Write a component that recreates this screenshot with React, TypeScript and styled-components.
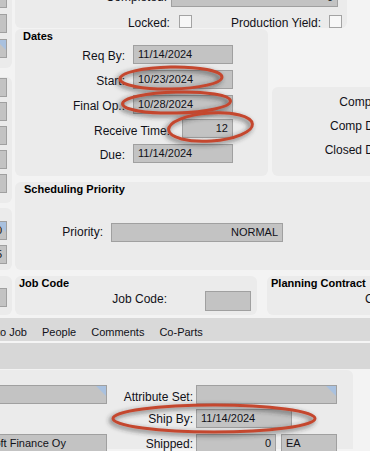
import styled, { createGlobalStyle } from 'styled-components'

const GlobalStyle = createGlobalStyle`
    html, body {
        margin: 0;
        padding: 0;
        background: #f3f3f3;
    }
    body {
        font-family: "Liberation Sans", Arial, sans-serif;
        color: #111118;
    }
`

const Screen = styled.div`
    position: relative;
    width: 370px;
    height: 451px;
    overflow: hidden;
    background: #f3f3f3;
    font-size: 12px;
`

//upper form area
const Upper = styled.div`
    display: flex;
    gap: 3px;
    margin-top: -20px;
    height: 335px;
`

const SideCol = styled.div`
    width: 12px;
    flex: none;
    display: flex;
    flex-direction: column;
`

const SidePanel = styled.div<{ $h: number, $top: number, $pad: number, $gap: number }>`
    box-sizing: border-box;
    height: ${p => p.$h}px;
    margin-top: ${p => p.$top}px;
    padding: ${p => p.$pad}px 5px 0 0;
    display: flex;
    flex-direction: column;
    align-items: flex-end;
    gap: ${p => p.$gap}px;
    background: #ebebeb;
    border-radius: 0 6px 6px 0;
`

const MainCol = styled.div`
    width: 420px;
    flex: none;
    display: flex;
    flex-direction: column;
`

const Panel = styled.div`
    box-sizing: border-box;
    background: #ebebeb;
    border-radius: 6px;
`

const TopPanel = styled(Panel)`
    width: 332px;
    height: 48px;
    padding: 7px 5px 0 0;
    display: flex;
    flex-direction: column;
    align-items: flex-end;
    gap: 8px;
    border-radius: 0 0 6px 6px;
`

const DatesRow = styled.div`
    display: flex;
    gap: 4px;
    height: 147px;
    margin-top: 1px;
`

const DatesPanel = styled(Panel)`
    width: 253px;
`

const CompPanel = styled(Panel)`
    flex: 1;
    margin-top: 58px;
    padding: 6px 41px 0 0;
    display: flex;
    flex-direction: column;
    align-items: flex-end;
    gap: 5px;
`

const SchedulePanel = styled(Panel)`
    height: 88px;
    margin-top: 6px;
`

const CodeRow = styled.div`
    display: flex;
    gap: 10px;
    height: 39px;
    margin-top: 6px;
`

const JobPanel = styled(Panel)`
    width: 242px;
`

const PlanningPanel = styled(Panel)`
    flex: 1;
`

const Title = styled.div<{ $indent: number }>`
    padding-left: ${p => p.$indent}px;
    font-size: 11px;
    font-weight: bold;
    line-height: 14px;
    color: #000;
    white-space: nowrap;
`

const FieldStack = styled.div<{ $gap: number, $top: number }>`
    display: flex;
    flex-direction: column;
    gap: ${p => p.$gap}px;
    margin-top: ${p => p.$top}px;
`

const FieldRow = styled.div<{ $gap?: number, $top?: number, $indent?: number }>`
    display: flex;
    align-items: flex-start;
    gap: ${p => p.$gap ?? 8}px;
    margin-top: ${p => p.$top ?? 0}px;
    padding-left: ${p => p.$indent ?? 0}px;
`

const CompletedRow = styled(FieldRow)`
    margin-right: 4px;
`

// $nudge moves the text down (or up) against the field it labels
const Label = styled.span<{ $w?: number, $nudge?: number, $lh?: number }>`
    flex: none;
    box-sizing: border-box;
    ${p => p.$w !== undefined && `width: ${p.$w}px;`}
    height: ${p => p.$lh ?? 19}px;
    text-align: right;
    font-size: 12px;
    line-height: ${p => p.$lh ?? 19}px;
    padding-top: ${p => Math.max(p.$nudge ?? 0, 0)}px;
    margin-top: ${p => Math.min(p.$nudge ?? 0, 0)}px;
    white-space: nowrap;
`

const Field = styled.div<{ $w: number, $h?: number, $align?: 'left' | 'right', $marked?: boolean }>`
    position: relative;
    box-sizing: border-box;
    flex: none;
    width: ${p => p.$w}px;
    height: ${p => p.$h ?? 19}px;
    padding: 0 4px;
    border: 1px solid #a0a0a0;
    background: #c3c3c3;
    font-size: 11px;
    line-height: ${p => (p.$h ?? 19) - 2}px;
    text-align: ${p => p.$align ?? 'left'};
    white-space: nowrap;
    overflow: hidden;
    &::after {
        content: '';
        display: ${p => p.$marked ? 'block' : 'none'};
        position: absolute;
        top: 0;
        right: 0;
        border-top: 10px solid #a9c1df;
        border-left: 10px solid transparent;
    }
`

const CheckRow = styled.div`
    display: flex;
    align-items: flex-start;
    gap: 39px;
`

const CheckPair = styled.div<{ $gap: number }>`
    display: flex;
    align-items: flex-start;
    gap: ${p => p.$gap}px;
`

const Check = styled.span`
    box-sizing: border-box;
    width: 13px;
    height: 13px;
    border: 1px solid #a3a3a3;
    background: #f7f7f7;
`

//tabs and bottom area
const TabStrip = styled.div`
    display: flex;
    gap: 15px;
    box-sizing: border-box;
    height: 25px;
    margin-top: 3px;
    padding-top: 5px;
    align-items: center;
    background: #d9d9d9;
    border-bottom: 2px solid #f5f5f5;
    font-size: 11px;
    white-space: nowrap;
`

const Tab = styled.span<{ $shift?: number }>`
    margin-left: ${p => p.$shift ?? 0}px;
`

const SubBar = styled.div`
    height: 26px;
    background: #d7d7d7;
`

const BottomPanel = styled(Panel)`
    width: 403px;
    height: 79px;
    margin: 1px 0 0 -50px;
    padding-top: 14.5px;
    display: flex;
    flex-direction: column;
    gap: 5.5px;
    border-radius: 0 6px 0 0;
`

const BottomRow = styled.div`
    display: flex;
    align-items: flex-start;
`

const LeftSlot = styled.div`
    width: 157px;
    flex: none;
    display: flex;
    justify-content: flex-end;
`

const UnitPair = styled.div`
    display: flex;
    gap: 5px;
`

//annotation marks drawn over the form
const Marks = styled.svg`
    position: absolute;
    inset: 0;
    width: 370px;
    height: 451px;
    pointer-events: none;
`

const sideStubs = [
    { h: 88, top: 0, pad: 9, gap: 6, stubs: [{}, {}, { marked: true }] },
    { h: 126, top: 9, pad: 1, gap: 5, stubs: [{}, {}, {}, {}, {}] },
    { h: 62, top: 5, pad: 13, gap: 5, stubs: [{ marked: true, value: '0' }, { value: '5' }] },
    { h: 39, top: 6, pad: 12, gap: 5, stubs: [{}] },
] as { h: number, top: number, pad: number, gap: number, stubs: { marked?: boolean, value?: string }[] }[]

const dates = [
    { label: 'Req By:', value: '11/14/2024' },
    { label: 'Start:', value: '10/23/2024' },
    { label: 'Final Op.:', value: '10/28/2024' },
]

const marks = [
    { cx: 171, cy: 78, rx: 51, ry: 11, rot: -1 },
    { cx: 176.5, cy: 102.5, rx: 54, ry: 10.5, rot: -1.5 },
    { cx: 210.5, cy: 127, rx: 42, ry: 14, rot: -4 },
    { cx: 214, cy: 418.5, rx: 101, ry: 13.5, rot: 0 },
]

export default function App() {
    return <Screen>
        <GlobalStyle />
        <Upper>
            <SideCol>
                {sideStubs.map((panel, i) => <SidePanel key={i} $h={panel.h} $top={panel.top} $pad={panel.pad} $gap={panel.gap}>
                    {panel.stubs.map((stub, j) => <Field key={j} $w={40} $align="right" $marked={stub.marked}>{stub.value}</Field>)}
                </SidePanel>)}
            </SideCol>
            <MainCol>
                <TopPanel>
                    <CompletedRow $gap={4}>
                        <Label $lh={20}>Completed:</Label>
                        <Field $w={167} $h={20} $align="right">0</Field>
                    </CompletedRow>
                    <CheckRow>
                        <CheckPair $gap={9}>
                            <Label $lh={13} $nudge={1.5}>Locked:</Label>
                            <Check />
                        </CheckPair>
                        <CheckPair $gap={8}>
                            <Label $lh={13} $nudge={1.5}>Production Yield:</Label>
                            <Check />
                        </CheckPair>
                    </CheckRow>
                </TopPanel>
                <DatesRow>
                    <DatesPanel>
                        <Title $indent={8}>Dates</Title>
                        <FieldStack $gap={5.75} $top={2}>
                            {dates.map(d => <FieldRow key={d.label}>
                                <Label $w={110} $nudge={2}>{d.label}</Label>
                                <Field $w={100}>{d.value}</Field>
                            </FieldRow>)}
                            <FieldRow $gap={12}>
                                <Label $w={155} $nudge={3}>Receive Time:</Label>
                                <Field $w={51} $align="right">12</Field>
                            </FieldRow>
                            <FieldRow>
                                <Label $w={110} $nudge={2}>Due:</Label>
                                <Field $w={100}>11/14/2024</Field>
                            </FieldRow>
                        </FieldStack>
                    </DatesPanel>
                    <CompPanel>
                        <Label>Comp Op:</Label>
                        <Label>Comp Date:</Label>
                        <Label>Closed Date:</Label>
                    </CompPanel>
                </DatesRow>
                <SchedulePanel>
                    <Title $indent={9}>Scheduling Priority</Title>
                    <FieldRow $top={27}>
                        <Label $w={88}>Priority:</Label>
                        <Field $w={172} $align="right">NORMAL</Field>
                    </FieldRow>
                </SchedulePanel>
                <CodeRow>
                    <JobPanel>
                        <Title $indent={4}>Job Code</Title>
                        <FieldRow $gap={38} $top={1}>
                            <Label $w={152} $lh={20} $nudge={-2}>Job Code:</Label>
                            <Field $w={46} $h={20} />
                        </FieldRow>
                    </JobPanel>
                    <PlanningPanel>
                        <Title $indent={4}>Planning Contract</Title>
                        <FieldRow $top={1} $indent={98}>
                            <Label $lh={20} $nudge={-2}>Contract:</Label>
                        </FieldRow>
                    </PlanningPanel>
                </CodeRow>
            </MainCol>
        </Upper>
        <TabStrip>
            <Tab $shift={-3}>to Job</Tab>
            <Tab>People</Tab>
            <Tab>Comments</Tab>
            <Tab>Co-Parts</Tab>
        </TabStrip>
        <SubBar />
        <BottomPanel>
            <BottomRow>
                <LeftSlot><Field $w={157} $marked /></LeftSlot>
                <FieldRow $gap={3}>
                    <Label $w={86} $nudge={3}>Attribute Set:</Label>
                    <Field $w={141} $marked />
                </FieldRow>
            </BottomRow>
            <BottomRow>
                <LeftSlot />
                <FieldRow $gap={3}>
                    <Label $w={86} $nudge={1}>Ship By:</Label>
                    <Field $w={96}>11/14/2024</Field>
                </FieldRow>
            </BottomRow>
            <BottomRow>
                <LeftSlot><Field $w={150}>Microsoft Finance Oy</Field></LeftSlot>
                <FieldRow $gap={3}>
                    <Label $w={86} $nudge={1}>Shipped:</Label>
                    <UnitPair>
                        <Field $w={80} $align="right">0</Field>
                        <Field $w={56}>EA</Field>
                    </UnitPair>
                </FieldRow>
            </BottomRow>
        </BottomPanel>
        <Marks viewBox="0 0 370 451">
            <defs>
                <filter id="inkShadow" x="-20%" y="-60%" width="140%" height="220%">
                    <feDropShadow dx="-2" dy="2" stdDeviation="2.5" floodColor="#2e2e2e" floodOpacity="0.75" />
                </filter>
            </defs>
            <g fill="none" stroke="#c4472f" strokeWidth="3" filter="url(#inkShadow)">
                {marks.map((m, i) => <ellipse key={i} cx={m.cx} cy={m.cy} rx={m.rx} ry={m.ry}
                    transform={`rotate(${m.rot} ${m.cx} ${m.cy})`} />)}
            </g>
        </Marks>
    </Screen>
}
